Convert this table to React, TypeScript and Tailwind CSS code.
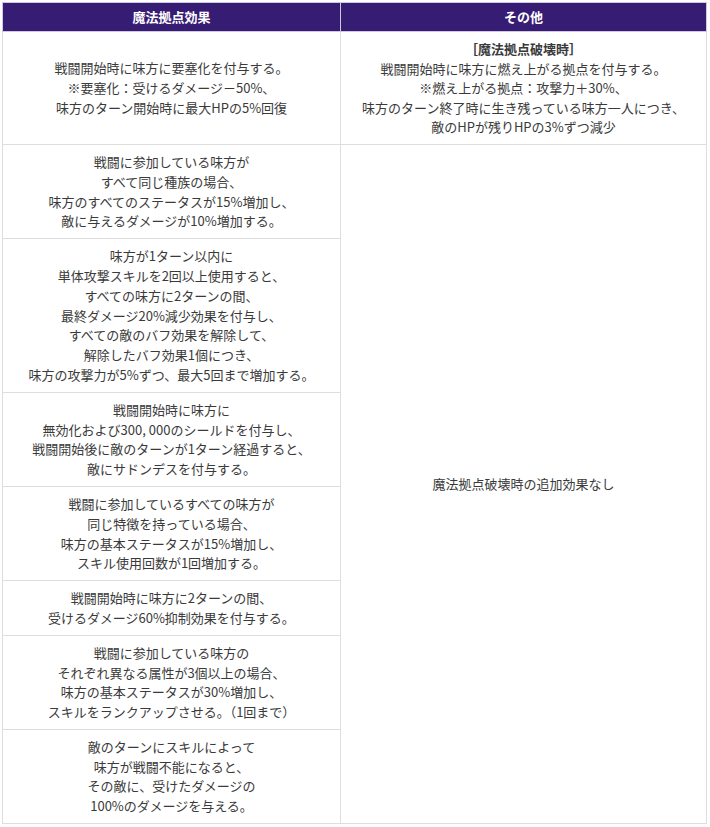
import React from "react";

const leftRows: string[][] = [
  [
    "戦闘に参加している味方が",
    "すべて同じ種族の場合、",
    "味方のすべてのステータスが15%増加し、",
    "敵に与えるダメージが10%増加する。",
  ],
  [
    "味方が1ターン以内に",
    "単体攻撃スキルを2回以上使用すると、",
    "すべての味方に2ターンの間、",
    "最終ダメージ20%減少効果を付与し、",
    "すべての敵のバフ効果を解除して、",
    "解除したバフ効果1個につき、",
    "味方の攻撃力が5%ずつ、最大5回まで増加する。",
  ],
  [
    "戦闘開始時に味方に",
    "無効化および300, 000のシールドを付与し、",
    "戦闘開始後に敵のターンが1ターン経過すると、",
    "敵にサドンデスを付与する。",
  ],
  [
    "戦闘に参加しているすべての味方が",
    "同じ特徴を持っている場合、",
    "味方の基本ステータスが15%増加し、",
    "スキル使用回数が1回増加する。",
  ],
  ["戦闘開始時に味方に2ターンの間、", "受けるダメージ60%抑制効果を付与する。"],
  [
    "戦闘に参加している味方の",
    "それぞれ異なる属性が3個以上の場合、",
    "味方の基本ステータスが30%増加し、",
    "スキルをランクアップさせる。（1回まで）",
  ],
  [
    "敵のターンにスキルによって",
    "味方が戦闘不能になると、",
    "その敵に、受けたダメージの",
    "100%のダメージを与える。",
  ],
];

function Lines({ lines }: { lines: string[] }) {
  return (
    <>
      {lines.map((l, i) => (
        <div key={i}>{l}</div>
      ))}
    </>
  );
}

export default function App() {
  return (
    <div
      className="p-[2px] bg-white"
      style={{ fontFamily: '"Noto Sans CJK JP", "Noto Sans", sans-serif' }}
    >
      <table className="w-[705px] border-collapse table-fixed text-[13px] leading-[19.8px] text-[#3a3a3a]">
        <colgroup>
          <col className="w-[338px]" />
          <col />
        </colgroup>
        <thead>
          <tr>
            <th className="bg-[#371c73] text-white font-bold border border-[#cfc8df] py-[4px] leading-[20px] text-center">
              魔法拠点効果
            </th>
            <th className="bg-[#371c73] text-white font-bold border border-[#cfc8df] py-[4px] leading-[20px] text-center">
              その他
            </th>
          </tr>
        </thead>
        <tbody>
          <tr>
            <td className="border border-[#dedede] py-[7px] text-center align-middle">
              <Lines
                lines={[
                  "戦闘開始時に味方に要塞化を付与する。",
                  "※要塞化：受けるダメージ－50%、",
                  "味方のターン開始時に最大HPの5%回復",
                ]}
              />
            </td>
            <td className="border border-[#dedede] py-[7px] leading-[19.6px] text-center align-middle">
              <div className="font-bold">［魔法拠点破壊時］</div>
              <Lines
                lines={[
                  "戦闘開始時に味方に燃え上がる拠点を付与する。",
                  "※燃え上がる拠点：攻撃力＋30%、",
                  "味方のターン終了時に生き残っている味方一人につき、",
                  "敵のHPが残りHPの3%ずつ減少",
                ]}
              />
            </td>
          </tr>
          {leftRows.map((lines, i) => (
            <tr key={i}>
              <td className="border border-[#dedede] py-[7px] text-center align-middle">
                <Lines lines={lines} />
              </td>
              {i === 0 && (
                <td
                  rowSpan={leftRows.length}
                  className="border border-[#dedede] py-[7px] text-center align-middle"
                >
                  魔法拠点破壊時の追加効果なし
                </td>
              )}
            </tr>
          ))}
        </tbody>
      </table>
    </div>
  );
}
